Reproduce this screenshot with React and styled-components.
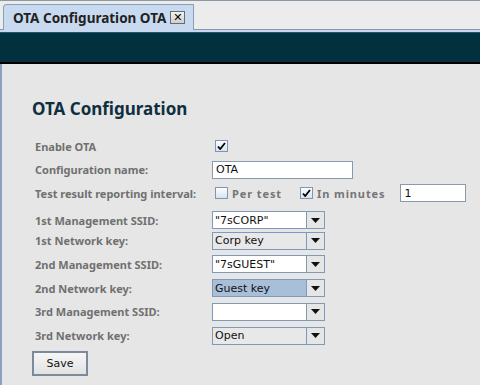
import React from "react";
import styled, { createGlobalStyle } from "styled-components";

const Global = createGlobalStyle`
  html, body { margin: 0; padding: 0; }
  body {
    width: 480px; height: 385px; overflow: hidden;
    background: #ececec;
    font-family: "DejaVu Sans", sans-serif;
  }
`;

const Page = styled.div`
  width: 480px; height: 385px;
  display: flex; flex-direction: column;
  border-top: 1px solid #8c98a4;
  box-sizing: border-box;
`;

const TabBar = styled.div`
  display: flex; align-items: flex-end;
  height: 28px; padding-left: 3px;
  border-bottom: 1px solid #8497b5;
`;

const Tab = styled.div`
  height: 26px; width: 191px; box-sizing: border-box;
  margin-bottom: -1px;
  background: #c8daf0;
  border: 1px solid #8aa0b8; border-bottom: none;
  border-top-left-radius: 4px;
  display: flex; align-items: center; gap: 4px;
  padding-left: 9px;
  font-family: "Noto Sans", sans-serif; font-weight: 700; font-size: 13.5px; color: #222;
`;

const Close = styled.span`
  width: 15px; height: 13px; box-sizing: border-box;
  border: 1px solid #6b6b6b;
  background: linear-gradient(#f2f2f2, #cfcfcf);
  display: flex; align-items: center; justify-content: center;
  font-family: "DejaVu Sans", sans-serif; font-size: 11px; font-weight: 700; color: #000;
  line-height: 1;
`;

const Strip = styled.div`
  height: 2px; background: #c8d9ef;
`;

const Header = styled.div`
  height: 32px; box-sizing: border-box;
  background: #03303f;
  border-top: 1px solid #1b5a70;
  border-bottom: 2px solid #000;
`;

const Content = styled.div`
  flex: 1; background: #e6e6e6;
  border-left: 2px solid #8ba0c0;
  padding: 33px 0 0 30px;
`;

const Title = styled.h1`
  margin: 0 0 17px 0;
  font-family: "Noto Sans", sans-serif; font-weight: 700; font-size: 17px;
  color: #0e2f3e;
`;

const Form = styled.div`
  display: grid;
  grid-template-columns: 177px auto;
  grid-auto-rows: 18px;
  row-gap: 5.7px;
  padding-left: 3px;
`;

const Label = styled.div`
  display: flex; align-items: center;
  font-family: "Noto Sans", sans-serif; font-weight: 700; font-size: 11px;
  color: #707070;
  margin-top: ${p => p.$mt || 0}px;
`;

const Cell = styled.div`
  display: flex; align-items: center;
  margin-top: ${p => p.$mt || 0}px;
`;

const Check = styled.span`
  width: 13px; height: 12px; box-sizing: border-box;
  border: 1px solid #7f95b0;
  background: linear-gradient(#fdfeff, #d6e2ee);
  display: inline-flex; align-items: center; justify-content: center;
  margin-left: ${p => p.$ml ?? 3}px;
`;

const TextField = styled.div`
  width: ${p => p.$w}px; height: 18px; box-sizing: border-box;
  border: 1px solid #8a9aaa; background: #fff;
  font-size: 11px; color: #111; padding-left: 3px;
  display: flex; align-items: center;
  margin-left: ${p => p.$ml || 0}px;
`;

const OptLabel = styled.span`
  font-family: "Noto Sans", sans-serif; font-weight: 700; font-size: 11px;
  color: #757575; letter-spacing: 0.9px;
  margin-left: ${p => p.$ml || 0}px;
`;

const Combo = styled.div`
  width: 113px; height: 18px; box-sizing: border-box;
  border: 1px solid #7f9ab8;
  display: flex;
  background: ${p => p.$bg};
`;

const ComboText = styled.div`
  flex: 1; display: flex; align-items: center;
  padding-left: 2px; font-size: 11px; color: #111;
  border-right: 1px solid #7f9ab8;
`;

const Arrow = styled.div`
  width: 17px; background: #e6e6e6;
  display: flex; align-items: center; justify-content: center;
`;

const SaveButton = styled.button`
  display: block;
  margin: 6px 0 0 0;
  width: 56px; height: 25px;
  border: 2px solid #7b8b9b;
  background: linear-gradient(#f6f6f6, #e2e2e2);
  font-family: "DejaVu Sans", sans-serif; font-size: 11px; color: #111;
  padding: 0;
`;

const CheckMark = () => (
  <svg width="9" height="8" viewBox="0 0 9 8">
    <path d="M1 4.5 L3.2 7 L8 1" stroke="#000" strokeWidth="1.8" fill="none" />
  </svg>
);

const Tri = () => (
  <svg width="9" height="5" viewBox="0 0 9 5"><path d="M0 0 H9 L4.5 5 Z" fill="#111" /></svg>
);

const ComboBox = ({ value, bg }) => (
  <Combo $bg={bg}>
    <ComboText>{value}</ComboText>
    <Arrow><Tri /></Arrow>
  </Combo>
);

const combos = [
  ["1st Management SSID:", "\"7sCORP\"", "#ffffff"],
  ["1st Network key:", "Corp key", "#e8e8e8"],
  ["2nd Management SSID:", "\"7sGUEST\"", "#ffffff"],
  ["2nd Network key:", "Guest key", "#a9bfd9"],
  ["3rd Management SSID:", "", "#ffffff"],
  ["3rd Network key:", "Open", "#e8e8e8"],
];

export default function App() {
  return (
    <>
      <Global />
      <Page>
        <TabBar>
          <Tab>OTA Configuration OTA<Close>✕</Close></Tab>
        </TabBar>
        <Strip />
        <Header />
        <Content>
          <Title>OTA Configuration</Title>
          <Form>
            <Label>Enable OTA</Label>
            <Cell><Check><CheckMark /></Check></Cell>
            <Label>Configuration name:</Label>
            <Cell><TextField $w={141}>OTA</TextField></Cell>
            <Label>Test result reporting interval:</Label>
            <Cell>
              <Check />
              <OptLabel $ml={4}>Per test</OptLabel>
              <Check $ml={18}><CheckMark /></Check>
              <OptLabel $ml={4}>In minutes</OptLabel>
              <TextField $w={66} $ml={15}>1</TextField>
            </Cell>
            {combos.map(([l, v, bg], i) => (
              <React.Fragment key={l}>
                <Label $mt={i === 0 ? 6 : 0}>{l}</Label>
                <Cell $mt={i === 0 ? 6 : 0}><ComboBox value={v} bg={bg} /></Cell>
              </React.Fragment>
            ))}
          </Form>
          <SaveButton>Save</SaveButton>
        </Content>
      </Page>
    </>
  );
}
